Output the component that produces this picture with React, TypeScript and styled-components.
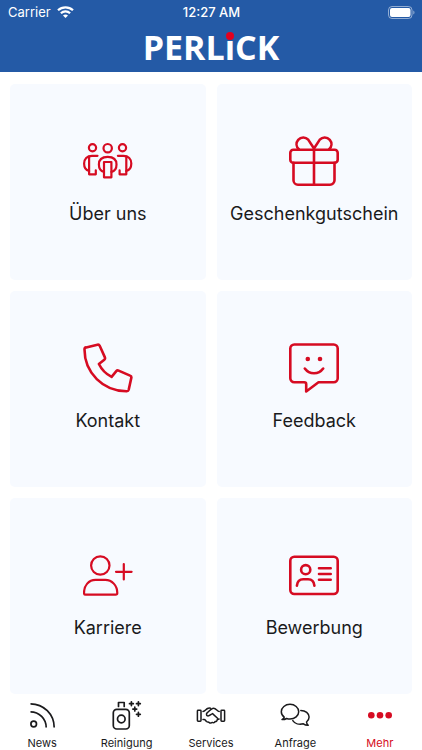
import React from "react";
import styled, { createGlobalStyle } from "styled-components";

const BLUE = "#245aa6";
const RED = "#d60b22";
const INK = "#1a1a1c";

const GlobalStyle = createGlobalStyle`
  *, *::before, *::after { box-sizing: border-box; }
  body {
    margin: 0;
    background: #ffffff;
    color: ${INK};
    font-family: Inter, "Liberation Sans", sans-serif;
  }
`;

const Screen = styled.div`
  display: flex;
  flex-direction: column;
  min-height: 100vh;
`;

const Header = styled.header`
  background: ${BLUE};
  color: #ffffff;
  padding-bottom: 2px;
`;

const StatusBar = styled.div`
  display: grid;
  grid-template-columns: 1fr auto 1fr;
  align-items: center;
  height: 24px;
  padding: 0 7px 0 8px;
  font-size: 13px;
  line-height: 16px;
`;

const Carrier = styled.span`
  display: flex;
  align-items: center;
  gap: 6px;
`;

const Time = styled.time`
  font-weight: 500;
`;

const Battery = styled.svg`
  justify-self: end;
  display: block;
`;

const Logo = styled.h1`
  margin: 0;
  text-align: center;
  font-family: "Open Sans", "Noto Sans", sans-serif;
  font-size: 34px;
  line-height: 46px;
  font-weight: 700;
`;

const LogoDot = styled.span`
  position: relative;

  &::after {
    content: "";
    position: absolute;
    top: 8px;
    left: 50%;
    width: 8px;
    height: 8px;
    margin-left: -4px;
    border-radius: 50%;
    background: #e2001f;
  }
`;

const CardGrid = styled.main`
  flex: 1;
  display: grid;
  grid-template-columns: 1fr 1fr;
  grid-auto-rows: minmax(196px, 1fr);
  gap: 11px;
  padding: 12px 10px 0;
`;

const Card = styled.button`
  display: flex;
  flex-direction: column;
  align-items: center;
  justify-content: center;
  gap: 15px;
  min-width: 0;
  padding: 0 0 1px;
  border: 0;
  border-radius: 5px;
  background: #f7faff;
  color: ${INK};
  font-family: inherit;
  font-size: 18px;
  line-height: 26px;
  font-weight: 400;
  cursor: pointer;
`;

const CardIcon = styled.svg`
  display: block;
  width: 50px;
  height: 50px;
  fill: none;
  stroke: ${RED};
  stroke-width: 2.6;
  stroke-linecap: round;
  stroke-linejoin: round;
`;

const TabBar = styled.nav`
  display: grid;
  grid-template-columns: repeat(5, 1fr);
  background: #ffffff;
`;

const Tab = styled.a<{ $active?: boolean }>`
  display: flex;
  flex-direction: column;
  align-items: center;
  gap: 6px;
  padding-top: 6px;
  color: ${({ $active }) => ($active ? RED : INK)};
  font-size: 11px;
  line-height: 14px;
  font-weight: 400;
  text-decoration: none;
`;

const TabIcon = styled.svg`
  display: block;
  width: 30px;
  height: 30px;
  fill: none;
  stroke: currentColor;
  stroke-width: 1.7;
  stroke-linecap: round;
  stroke-linejoin: round;
`;

const cards: { label: string; icon: React.ReactNode }[] = [
  {
    label: "Über uns",
    icon: (
      <g strokeWidth="2.2">
        <circle cx="9.500" cy="11.700" r="3.600" />
        <circle cx="39.500" cy="11.700" r="3.600" />
        <circle cx="24.700" cy="12.200" r="4.200" />
        <path d="M14.500 19.800H9c-5 0-7.900 3.200-7.900 7.700 0 3.800 1.700 6.700 5 7.400" />
        <path d="M6.100 20.800V38.300h6.700v-4" />
        <path d="M34.900 19.800h5.500c5 0 7.900 3.200 7.900 7.700 0 3.800-1.700 6.700-5 7.400" />
        <path d="M43.300 20.800V38.300h-6.700v-4" />
        <path d="M21 35.800c-3.200-.6-5.100-3.500-5.100-7.300 0-4.700 3.200-7.600 8.800-7.600s8.800 2.900 8.800 7.600c0 3.800-1.900 6.700-5.100 7.300" />
        <path d="M21 26V41.300h7.400V26Z" />
      </g>
    ),
  },
  {
    label: "Geschenkgutschein",
    icon: (
      <>
        <rect x="1.300" y="13.800" width="47.400" height="13" rx="3" />
        <path d="M4.500 26.800v17.400a4.500 4.500 0 0 0 4.500 4.500h32a4.500 4.500 0 0 0 4.500-4.500V26.800M25 13.800v34.900" />
        <path d="M10 13.500C7 10.500 6.800 6.500 9.200 3.800 12 .7 16.500.7 19.200 3.600L25 12.500l5.800-8.900C33.500.7 38 .7 40.800 3.800c2.400 2.700 2.200 6.700-.8 9.700" />
      </>
    ),
  },
  {
    label: "Kontakt",
    icon: (
      <path d="M3.200 4.400 14.400 1.700a2 2 0 0 1 2.300 1.100l5.200 11.600a2 2 0 0 1-.6 2.300L15.900 21c2.700 5.500 6.800 9.900 12.700 12.900l4.700-5.700a2 2 0 0 1 2.300-.6l11.500 5a2 2 0 0 1 1.200 2.300l-2.600 11.800a2 2 0 0 1-2 1.500C20.100 48.300 1.500 29.600 1.500 6.500a2 2 0 0 1 1.700-2.100Z" />
    ),
  },
  {
    label: "Feedback",
    icon: (
      <>
        <path d="M5.300 1.500h39.400a4 4 0 0 1 4 4v29.800a4 4 0 0 1-4 4H29.500L17.200 48.500v-7.200a2 2 0 0 0-2-2H5.300a4 4 0 0 1-4-4V5.500a4 4 0 0 1 4-4Z" />
        <path d="M15.800 25.500c4.600 6.300 13.800 6.300 18.400 0" />
        <circle cx="18.800" cy="16" r="2.300" fill={RED} stroke="none" />
        <circle cx="31" cy="16" r="2.300" fill={RED} stroke="none" />
      </>
    ),
  },
  {
    label: "Karriere",
    icon: (
      <g strokeWidth="2.2">
        <circle cx="17.300" cy="15.500" r="9.200" />
        <path d="M12.500 29.800h9.700c6.800 0 12.100 5.800 12.100 13.200a1.700 1.700 0 0 1-1.700 1.700H2.700A1.700 1.700 0 0 1 1 43c0-7.400 4.700-13.200 11.500-13.200Z" />
        <path d="M40.800 14v15.500M33 21.800h15.600" />
      </g>
    ),
  },
  {
    label: "Bewerbung",
    icon: (
      <>
        <rect x="1.300" y="6.800" width="47.400" height="37.200" rx="4" />
        <circle cx="16.700" cy="19.700" r="4.600" />
        <path d="M7.900 35.700c.4-4 2.900-6.400 6.300-6.400h4.900c3.400 0 5.900 2.400 6.300 6.400" />
        <path d="M30 18.300h11.700M30 24h11.700M30 29.700h11.700" />
      </>
    ),
  },
];

const tabs: { label: string; active?: boolean; icon: React.ReactNode }[] = [
  {
    label: "News",
    icon: (
      <g strokeLinecap="butt">
        <path d="M3.500 3.800c13.200 0 23.700 10.500 23.700 23.700M3.500 11.800c8.700 0 15.700 7 15.700 15.700" />
        <circle cx="6.700" cy="24" r="2.800" />
      </g>
    ),
  },
  {
    label: "Reinigung",
    icon: (
      <>
        <rect x="1.300" y="9.300" width="16" height="19.700" rx="3.500" />
        <circle cx="9.300" cy="19" r="3.800" />
        <path d="M6.500 6.500v-4h5.700v4" />
        <path d="M19.400 1.800v3.800M17.500 3.700h3.800M26.400 1.800v3.800M24.500 3.700h3.800M22.800 7.200V11M20.900 9.100h3.800M26.400 12.400v3.800M24.500 14.300h3.800" />
      </>
    ),
  },
  {
    label: "Services",
    icon: (
      <g strokeWidth="1.500">
        <rect x="1.400" y="10.300" width="3.600" height="11" rx=".7" />
        <rect x="25" y="10.300" width="3.600" height="11" rx=".7" />
        <path d="M7 11.500c1.800 0 3-2.200 4.500-3 1-.5 2-.5 3-.3" />
        <path d="M23.200 11.500c-2 0-3-3.200-5.600-3.200-1.700 0-3 1.300-6.500 4.600-1 1-.7 2.500.4 2.900 1.800.6 3.300-1.500 5-2.200l5.300 4.900" />
        <path d="M7 19.500h1.200c1 0 1.400 1.300 2.300 2 1 .7 1.800.3 2.500.9.800.7 1.500.9 2.300.5l1-.5c1.200.6 2.200.3 2.700-.8 1.400.1 2.200-.6 2.200-1.800.9-.2 1.200-.7 1.900-.8" />
      </g>
    ),
  },
  {
    label: "Anfrage",
    icon: (
      <g strokeWidth="1.500">
        <path d="M4.200 17.200C2.400 15.800 1.300 13.900 1.300 11.700c0-4.100 3.900-7.400 8.700-7.400s8.700 3.300 8.700 7.400-3.900 7.400-8.700 7.400c-1.200 0-2.300-.2-3.400-.6-1.300.8-2.900 1.200-4.600 1.100 1.200-.7 1.900-1.400 2.200-2.400Z" />
        <path d="M20.800 10.400c4.700 0 8.300 2.900 8.300 6.700 0 2-1 3.700-2.600 4.900.1 1.400.6 2.300 1.700 3.300-1.900.1-3.500-.5-4.800-1.500-4.200 1.100-8.600-.2-10.600-3.200" />
      </g>
    ),
  },
  {
    label: "Mehr",
    active: true,
    icon: (
      <g fill="currentColor" stroke="none">
        <circle cx="6.300" cy="15.300" r="3.300" />
        <circle cx="15" cy="15.300" r="3.300" />
        <circle cx="23.700" cy="15.300" r="3.300" />
      </g>
    ),
  },
];

export default function App() {
  return (
    <Screen>
      <GlobalStyle />
      <Header>
        <StatusBar>
          <Carrier>
            Carrier
            <svg width="17" height="12" viewBox="0 0 17 12" aria-hidden="true">
              <g fill="none" stroke="#fff" strokeWidth="2.200">
                <path d="M1 4.300c4.200-4 10.800-4 15 0" />
                <path d="M3.900 7.300c2.600-2.500 6.600-2.500 9.200 0" />
              </g>
              <path d="M8.500 12 6 9.500c1.400-1.300 3.600-1.300 5 0Z" fill="#fff" />
            </svg>
          </Carrier>
          <Time>12:27 AM</Time>
          <Battery width="27" height="13" viewBox="0 0 27 13" role="img" aria-label="Battery">
            <rect x=".5" y=".5" width="23.500" height="12" rx="3.500" fill="none" stroke="#fff" strokeOpacity=".5" />
            <rect x="2" y="2" width="20.500" height="9" rx="2" fill="#fff" />
            <path d="M25.300 4.500v4c1.600-.6 1.600-3.400 0-4Z" fill="#fff" fillOpacity=".5" />
          </Battery>
        </StatusBar>
        <Logo>
          PERL<LogoDot>i</LogoDot>CK
        </Logo>
      </Header>
      <CardGrid>
        {cards.map(({ label, icon }) => (
          <Card key={label} type="button">
            <CardIcon viewBox="0 0 50 50" aria-hidden="true">{icon}</CardIcon>
            {label}
          </Card>
        ))}
      </CardGrid>
      <TabBar>
        {tabs.map(({ label, icon, active }) => (
          <Tab key={label} href={`#${label.toLowerCase()}`} $active={active} aria-current={active ? "page" : undefined}>
            <TabIcon viewBox="0 0 30 30" aria-hidden="true">{icon}</TabIcon>
            {label}
          </Tab>
        ))}
      </TabBar>
    </Screen>
  );
}
